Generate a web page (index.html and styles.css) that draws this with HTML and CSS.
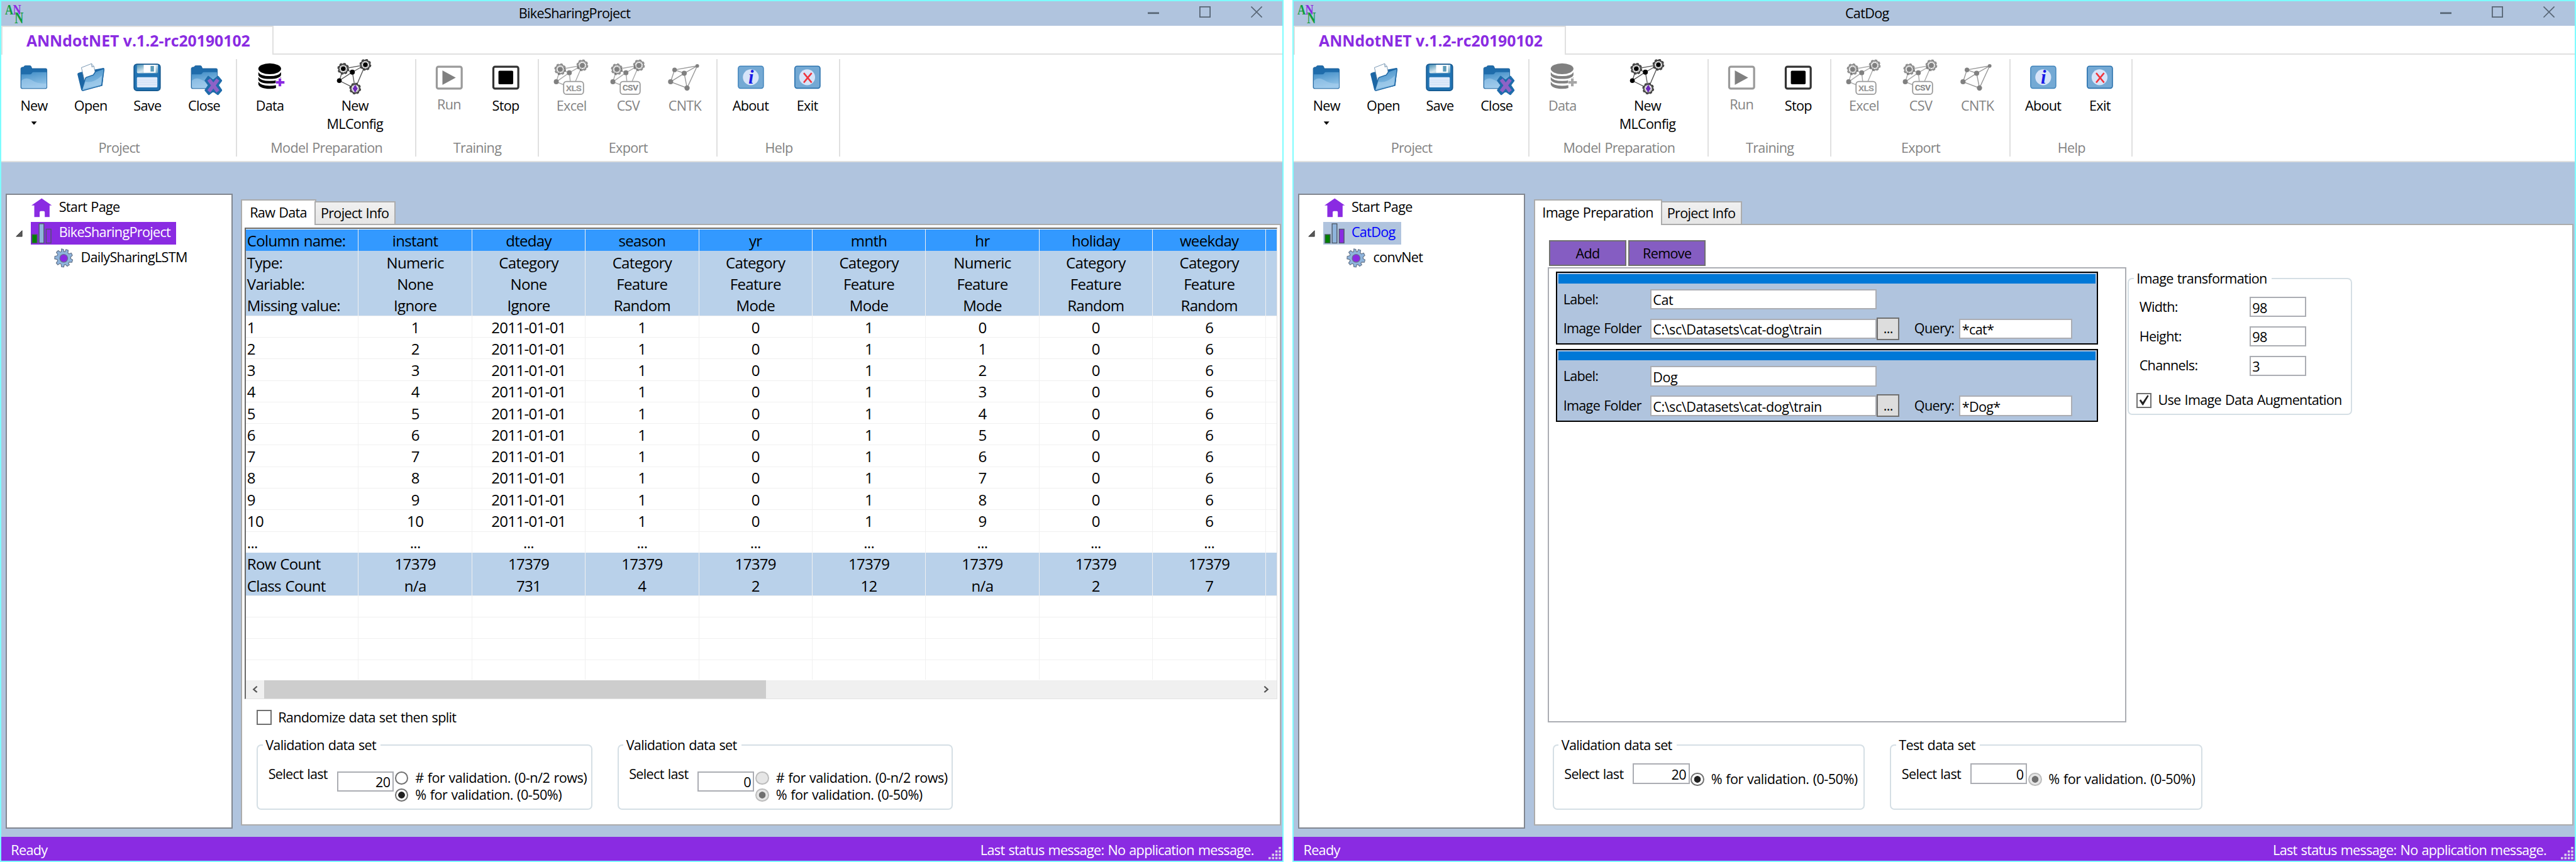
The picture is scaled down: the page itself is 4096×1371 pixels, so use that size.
FILE: index.html
```
<!DOCTYPE html>
<html lang="en">
<head>
<meta charset="utf-8">
<title>ANNdotNET</title>
<link rel="stylesheet" href="styles.css">
</head>
<body>
<svg class="sprite" aria-hidden="true">
  <defs>
    <linearGradient id="gBlue" x1="0" y1="0" x2="0.6" y2="1"><stop offset="0" stop-color="#2a7ab8"/><stop offset="1" stop-color="#8fc1e6"/></linearGradient>
    <linearGradient id="gFront" x1="0" y1="0" x2="0.3" y2="1"><stop offset="0" stop-color="#3f8cc6"/><stop offset="1" stop-color="#93c4e8"/></linearGradient>
    <linearGradient id="gMetal" x1="0" y1="0" x2="1" y2="1"><stop offset="0" stop-color="#4d93b5"/><stop offset="0.5" stop-color="#d5e6ee"/><stop offset="1" stop-color="#6ba3bf"/></linearGradient>
    <g id="cog">
      <circle r="8" fill="#fff" stroke="#444" stroke-width="2.4"/>
      <circle r="9.4" fill="none" stroke="#444" stroke-width="2" stroke-dasharray="4.2 3.2"/>
      <circle r="5.8" fill="none" stroke="#777" stroke-width="1.4" stroke-dasharray="1.6 1.6"/>
    </g>
    <g id="net">
      <path d="M12 17 51 10 33 52 28 23 5 38 33 52M12 17 5 38M28 23 51 10M12 17 28 23" fill="none" stroke="#555" stroke-width="1.5"/>
      <use href="#cog" x="12" y="17"/><use href="#cog" x="51" y="10"/>
      <circle cx="12" cy="17" r="4.2"/><circle cx="51" cy="10" r="4.2"/><circle cx="28" cy="23" r="4.4"/><circle cx="5" cy="38" r="4.2"/>
    </g>
    <g id="netgray">
      <path d="M12 18 51 11 36 46M28 24 30 42M28 24 5 40 20 46M12 18 5 40M28 24 51 11M12 18 28 24" fill="none" stroke="#aaa" stroke-width="1.6"/>
      <g opacity=".6"><use href="#cog" x="12" y="18"/><use href="#cog" x="51" y="11"/></g>
      <g fill="#808080"><circle cx="12" cy="18" r="4.4"/><circle cx="51" cy="11" r="4.4"/><circle cx="28" cy="24" r="4.4"/><circle cx="5" cy="40" r="4.4"/></g>
      <rect x="18" y="39.500" width="35" height="22.500" rx="5" fill="#fff" stroke="#999" stroke-width="2"/>
    </g>
    <g id="folderShape">
      <path d="M9 50V17q0-2 2-2.500l3-.3 1-1.700q.6-.8 2-.8h8q1.500 0 2 1l1.500 4H53q2 0 2 2V50q0 2-2 2H11q-2 0-2-2Z" fill="#1f6cab" stroke="#195e98"/>
      <path d="M10 27h15q2 0 3-1.500l1-1.500q.8-1 2-1h22.500q1 0 1 1V49q0 2.200-2 2.200H12q-2 0-2-2.200Z" fill="url(#gFront)"/>
      <path d="M10 38q8-7 18-1 10 7 26 6v6q0 2.200-2 2.200H12q-2 0-2-2.200Z" fill="#a9d0ef" opacity=".55"/>
    </g>
  </defs>
  <symbol id="i-logo" viewBox="0 0 36 36">
    <g font-family="Liberation Serif, serif" font-weight="bold">
      <text x="1" y="19" font-size="26" textLength="14" lengthAdjust="spacingAndGlyphs" fill="#0f9d3c">A</text>
      <text x="15" y="19" font-size="26" textLength="14" lengthAdjust="spacingAndGlyphs" fill="#8a2be2">N</text>
      <text x="18" y="34" font-size="28" textLength="15" lengthAdjust="spacingAndGlyphs" fill="#0f9d3c">N</text>
    </g>
  </symbol>
  <symbol id="i-new" viewBox="0 0 64 64"><use href="#folderShape"/></symbol>
  <symbol id="i-open" viewBox="0 0 64 64">
    <path d="M9 27q0-2 1.500-2.500l4-1.500L55 15.500q1.500 0 1 2L53 47 18 55q-2 .5-2.500-1.500Z" fill="#1c66a4"/>
    <path d="m16 15 18-7 4 4.500 4 19-20 9Z" fill="#fdfdfd" stroke="#6a8cab"/>
    <path d="m34 8 .5 6 3.500-1.500" fill="#dfe6ee" stroke="#6a8cab"/>
    <path d="m17 54 6-20q.6-1.500 2-2l12-4 4-6L55 17q1 0 .8 2L52 45q-.3 1.500-2 2L19 55.500q-2 .3-2-1.500Z" fill="url(#gFront)" stroke="#1c66a4" stroke-width="1.600"/>
    <path d="m19 52 4-12q14 3 29-11l-2 16Z" fill="#b4d7f2" opacity=".5"/>
  </symbol>
  <symbol id="i-save" viewBox="0 0 64 64">
    <rect x="8" y="9" width="46" height="46.500" rx="5" fill="#2274b4" stroke="#14588f" stroke-width="2"/>
    <path d="M13 10h37v13q0 2-2 2H15q-2 0-2-2Z" fill="url(#gMetal)"/>
    <rect x="25" y="10" width="21" height="14" fill="#fff"/><rect x="37" y="12" width="6" height="10" fill="#5b9bb8"/>
    <rect x="13" y="32" width="36" height="18" rx="1.500" fill="#dfeafa"/>
    <path d="M13 37h36M13 41h36M13 45h36" stroke="#c9dbf4" stroke-width=".8"/>
  </symbol>
  <symbol id="i-close" viewBox="0 0 64 64">
    <use href="#folderShape"/>
    <path d="m39 31 8.500 7L56 31l6 7-6 8 6 9-6 7-8.500-6L40 62l-6-7 6-9-6-8Z" fill="#1f6cab" stroke="#1f6cab" stroke-width="3" stroke-linejoin="round"/>
    <path d="m40 36 16 21M56 36 40 57" stroke="#8e62c6" stroke-width="6.500"/>
  </symbol>
  <symbol id="i-data" viewBox="0 0 64 64">
    <ellipse cx="32" cy="17" rx="20" ry="9.500"/>
    <path d="M12 23q4 7 20 7t20-7v5q-2 7-20 7t-20-7ZM12 31.500q4 7 20 7t20-7v4.500q-2 7-20 7t-20-7ZM12 40q4 7 20 7 6 0 11-1v5q-4 1.500-11 1.500-17 0-20-7.500Z"/>
    <path d="M50 33v16M42.500 41h15.500" stroke="#fff" stroke-width="8"/>
    <path d="M50 34v14M43 41h15" stroke="#8a2be2" stroke-width="4.600"/>
  </symbol>
  <symbol id="i-ml" viewBox="0 0 64 64"><use href="#net"/><use href="#cog" x="33" y="52"/><path d="m33 45 4.500 7-4.500 7-4.500-7Z" fill="#6d28b8"/></symbol>
  <symbol id="i-run" viewBox="0 0 64 64"><rect x="10.500" y="13.500" width="44" height="38.500" rx="3" fill="#fff" stroke="#9a9a9a" stroke-width="3.600"/><path d="M20.500 20v25.500L44 32.700Z" fill="#808080"/></symbol>
  <symbol id="i-stop" viewBox="0 0 64 64"><rect x="10.500" y="13.500" width="44" height="38.500" rx="3" fill="#fff" stroke="#333" stroke-width="3.600"/><rect x="19.500" y="20.500" width="26" height="24" rx="2"/></symbol>
  <symbol id="i-xls" viewBox="0 0 64 64"><use href="#netgray"/><text x="35.500" y="56.500" font-size="15" text-anchor="middle" textLength="27" lengthAdjust="spacingAndGlyphs" font-family="Roboto, sans-serif" font-weight="bold" fill="#999">XLS</text></symbol>
  <symbol id="i-csv" viewBox="0 0 64 64"><use href="#netgray"/><text x="35.500" y="56" font-size="14" text-anchor="middle" textLength="27" lengthAdjust="spacingAndGlyphs" font-family="Roboto, sans-serif" font-weight="bold" fill="#888">CSV</text></symbol>
  <symbol id="i-cntk" viewBox="0 0 64 64">
    <path d="M14 19 54 12 36 51 7 40 14 19 31 25 54 12M31 25 7 40M31 25 36 51" fill="none" stroke="#999" stroke-width="1.600"/>
    <g fill="#808080"><circle cx="14" cy="19" r="4"/><circle cx="31" cy="25" r="4.500"/><circle cx="54" cy="12" r="3.200"/><circle cx="7" cy="40" r="4.500"/><circle cx="36" cy="51" r="4.600"/></g>
  </symbol>
  <symbol id="i-about" viewBox="0 0 64 64"><rect x="9.800" y="12.500" width="44.500" height="39" rx="4" fill="#74a9d4" stroke="#3f83bb" stroke-width="1.600"/><circle cx="32" cy="32" r="14" fill="#d7e4f9"/><text x="32" y="43" font-family="Liberation Serif, serif" font-style="italic" font-weight="bold" font-size="34" text-anchor="middle" fill="#1a1ae6">i</text></symbol>
  <symbol id="i-exit" viewBox="0 0 64 64"><rect x="9.800" y="12.500" width="44.500" height="39" rx="4" fill="#74a9d4" stroke="#2c73ae" stroke-width="1.800"/><circle cx="31.500" cy="32" r="14" fill="#d7e4f9"/><path d="m25.500 24.500 14 17M39.500 24.500l-14 17" stroke="#f0343c" stroke-width="2.800"/></symbol>
  <symbol id="i-home" viewBox="0 0 36 34"><path d="M18 .5 36 13h-4v20.500h-8.500V25q0-2-2-2h-5q-2 0-2 2v8.500H5V13H0Z" fill="#8a2be2"/></symbol>
  <symbol id="i-bars" viewBox="0 0 36 36"><g stroke="#4d5866" stroke-width="1.500"><rect x="1" y="20" width="9" height="15" fill="#008000"/><rect x="13.500" y="1" width="8.500" height="34" fill="#8fb4dc"/><rect x="26" y="10.500" width="8.500" height="24.500" fill="#8a2be2"/></g></symbol>
  <symbol id="i-gear" viewBox="0 0 34 34">
    <path d="m13 1 3.500 1 .8 4h2L21 2l4 1.500-.7 4.500 2 1.800 4-1.500 2 4-3 3v3l3.400 2-1.200 4.200-4.500-.3-1.800 2L27 29l-3.800 2.500L20 28.500l-2 .4-1 4.100-4-.6-.6-4.400-2-1.300-3.900 2.500-2.700-3.500 2.600-3.700-.8-2.300L1 18.500l.3-4.500 4.200-1 1-2.200L4 7l3.300-3 3.700 2.500 1.800-.7Z" fill="#8fb4dc" stroke="#64748a" stroke-width="1.300"/>
    <circle cx="17" cy="17.500" r="7" fill="#8a2be2" stroke="#64748a" stroke-width="1.300"/>
  </symbol>
  <symbol id="i-expand" viewBox="0 0 12 12"><path d="M11.300.8v10.500H.8Z" fill="#595959" stroke="#262626"/></symbol>
  <symbol id="i-min" viewBox="0 0 20 20"><path d="M0 12h20" stroke="#566473" stroke-width="3"/></symbol>
  <symbol id="i-max" viewBox="0 0 20 20"><path d="M1 1h18v18H1Z" fill="none" stroke="#566473" stroke-width="2"/></symbol>
  <symbol id="i-x" viewBox="0 0 20 20"><path d="m.5.5 19 19M19.500.5l-19 19" stroke="#566473" stroke-width="1.800"/></symbol>
  <symbol id="i-prev" viewBox="0 0 10 12"><path d="M8.500.8 2.500 6l6 5.200" fill="none" stroke="#555" stroke-width="2.400"/></symbol>
  <symbol id="i-next" viewBox="0 0 10 12"><path d="m1.500.8 6 5.200-6 5.200" fill="none" stroke="#555" stroke-width="2.400"/></symbol>
  <symbol id="i-grip" viewBox="0 0 22 22"><path d="M18 0h4v4h-4zM12 6h4v4h-4zM18 6h4v4h-4zM6 12h4v4H6zM12 12h4v4h-4zM18 12h4v4h-4zM0 18h4v4H0zM6 18h4v4H6zM12 18h4v4h-4zM18 18h4v4h-4z" fill="#d9d0ea"/></symbol>
  <symbol id="i-check" viewBox="0 0 22 22"><path d="m3 11 2.500-1.800L9 14 17.500 1.500 19.500 3 9.800 19.500H8.500Z" fill="#212121"/></symbol>
</svg>

<main class="desktop">
  <section class="window">
    <header class="titlebar">
      <svg class="logo"><use href="#i-logo"/></svg>
      <h1 class="title">BikeSharingProject</h1>
      <div class="caption"><svg><use href="#i-min"/></svg><svg><use href="#i-max"/></svg><svg><use href="#i-x"/></svg></div>
    </header>
    <div class="ribbon-tabs"><div class="ribbon-tab">ANNdotNET v.1.2-rc20190102</div><div class="ribbon-rest"></div></div>
    <nav class="ribbon">
      <div class="group">
        <div class="tools">
          <div class="tool"><svg><use href="#i-new"/></svg><span>New</span><i class="drop"></i></div>
          <div class="tool"><svg><use href="#i-open"/></svg><span>Open</span></div>
          <div class="tool"><svg><use href="#i-save"/></svg><span>Save</span></div>
          <div class="tool"><svg><use href="#i-close"/></svg><span>Close</span></div>
        </div>
        <div class="group-name">Project</div>
      </div>
      <div class="group">
        <div class="tools">
          <div class="tool"><svg><use href="#i-data"/></svg><span>Data</span></div>
          <div class="tool tool-wide"><svg><use href="#i-ml"/></svg><span>New<br>MLConfig</span></div>
        </div>
        <div class="group-name">Model Preparation</div>
      </div>
      <div class="group">
        <div class="tools">
          <div class="tool off raised"><svg><use href="#i-run"/></svg><span>Run</span></div>
          <div class="tool"><svg><use href="#i-stop"/></svg><span>Stop</span></div>
        </div>
        <div class="group-name">Training</div>
      </div>
      <div class="group">
        <div class="tools">
          <div class="tool off"><svg><use href="#i-xls"/></svg><span>Excel</span></div>
          <div class="tool off"><svg><use href="#i-csv"/></svg><span>CSV</span></div>
          <div class="tool off"><svg><use href="#i-cntk"/></svg><span>CNTK</span></div>
        </div>
        <div class="group-name">Export</div>
      </div>
      <div class="group">
        <div class="tools">
          <div class="tool"><svg><use href="#i-about"/></svg><span>About</span></div>
          <div class="tool"><svg><use href="#i-exit"/></svg><span>Exit</span></div>
        </div>
        <div class="group-name">Help</div>
      </div>
    </nav>
    <div class="work">
      <aside class="tree">
        <div class="node"><span class="twist"></span><span class="item"><svg class="home"><use href="#i-home"/></svg>Start Page</span></div>
        <div class="node"><span class="twist"><svg><use href="#i-expand"/></svg></span><span class="item active"><svg><use href="#i-bars"/></svg>BikeSharingProject</span></div>
        <div class="node child"><span class="twist"></span><span class="item"><svg><use href="#i-gear"/></svg>DailySharingLSTM</span></div>
      </aside>
      <div class="tabs">
        <div class="tab-row"><div class="tab current">Raw Data</div><div class="tab">Project Info</div></div>
        <div class="page">
          <div class="grid">
            <table>
              <tbody>
                <tr class="head"><td>Column name:</td><td>instant</td><td>dteday</td><td>season</td><td>yr</td><td>mnth</td><td>hr</td><td>holiday</td><td>weekday</td><td></td></tr>
                <tr class="meta"><td>Type:</td><td>Numeric</td><td>Category</td><td>Category</td><td>Category</td><td>Category</td><td>Numeric</td><td>Category</td><td>Category</td><td></td></tr>
                <tr class="meta"><td>Variable:</td><td>None</td><td>None</td><td>Feature</td><td>Feature</td><td>Feature</td><td>Feature</td><td>Feature</td><td>Feature</td><td></td></tr>
                <tr class="meta"><td>Missing value:</td><td>Ignore</td><td>Ignore</td><td>Random</td><td>Mode</td><td>Mode</td><td>Mode</td><td>Random</td><td>Random</td><td></td></tr>
                <tr><td>1</td><td>1</td><td>2011-01-01</td><td>1</td><td>0</td><td>1</td><td>0</td><td>0</td><td>6</td><td></td></tr>
                <tr><td>2</td><td>2</td><td>2011-01-01</td><td>1</td><td>0</td><td>1</td><td>1</td><td>0</td><td>6</td><td></td></tr>
                <tr><td>3</td><td>3</td><td>2011-01-01</td><td>1</td><td>0</td><td>1</td><td>2</td><td>0</td><td>6</td><td></td></tr>
                <tr><td>4</td><td>4</td><td>2011-01-01</td><td>1</td><td>0</td><td>1</td><td>3</td><td>0</td><td>6</td><td></td></tr>
                <tr><td>5</td><td>5</td><td>2011-01-01</td><td>1</td><td>0</td><td>1</td><td>4</td><td>0</td><td>6</td><td></td></tr>
                <tr><td>6</td><td>6</td><td>2011-01-01</td><td>1</td><td>0</td><td>1</td><td>5</td><td>0</td><td>6</td><td></td></tr>
                <tr><td>7</td><td>7</td><td>2011-01-01</td><td>1</td><td>0</td><td>1</td><td>6</td><td>0</td><td>6</td><td></td></tr>
                <tr><td>8</td><td>8</td><td>2011-01-01</td><td>1</td><td>0</td><td>1</td><td>7</td><td>0</td><td>6</td><td></td></tr>
                <tr><td>9</td><td>9</td><td>2011-01-01</td><td>1</td><td>0</td><td>1</td><td>8</td><td>0</td><td>6</td><td></td></tr>
                <tr><td>10</td><td>10</td><td>2011-01-01</td><td>1</td><td>0</td><td>1</td><td>9</td><td>0</td><td>6</td><td></td></tr>
                <tr><td>...</td><td>...</td><td>...</td><td>...</td><td>...</td><td>...</td><td>...</td><td>...</td><td>...</td><td></td></tr>
                <tr class="meta"><td>Row Count</td><td>17379</td><td>17379</td><td>17379</td><td>17379</td><td>17379</td><td>17379</td><td>17379</td><td>17379</td><td></td></tr>
                <tr class="meta"><td>Class Count</td><td>n/a</td><td>731</td><td>4</td><td>2</td><td>12</td><td>n/a</td><td>2</td><td>7</td><td></td></tr>
                <tr><td></td><td></td><td></td><td></td><td></td><td></td><td></td><td></td><td></td><td></td></tr>
                <tr><td></td><td></td><td></td><td></td><td></td><td></td><td></td><td></td><td></td><td></td></tr>
                <tr><td></td><td></td><td></td><td></td><td></td><td></td><td></td><td></td><td></td><td></td></tr>
                <tr><td></td><td></td><td></td><td></td><td></td><td></td><td></td><td></td><td></td><td></td></tr>
              </tbody>
            </table>
            <div class="scroll"><span class="arrow"><svg><use href="#i-prev"/></svg></span><span class="thumb"></span><span class="arrow end"><svg><use href="#i-next"/></svg></span></div>
          </div>
          <label class="check-row random"><span class="check"></span>Randomize data set then split</label>
          <div class="sets">
            <fieldset class="set">
              <legend>Validation data set</legend>
              <div class="pick"><span class="pick-label">Select last</span><input class="num" value="20">
                <div class="options"><label><span class="radio"></span># for validation. (0-n/2 rows)</label><label><span class="radio on"></span>% for validation. (0-50%)</label></div></div>
            </fieldset>
            <fieldset class="set">
              <legend>Validation data set</legend>
              <div class="pick"><span class="pick-label">Select last</span><input class="num" value="0">
                <div class="options"><label><span class="radio dim"></span># for validation. (0-n/2 rows)</label><label><span class="radio on dim"></span>% for validation. (0-50%)</label></div></div>
            </fieldset>
          </div>
        </div>
      </div>
    </div>
    <footer class="status"><span>Ready</span><span class="message">Last status message: No application message.</span><svg><use href="#i-grip"/></svg></footer>
  </section>

  <section class="window">
    <header class="titlebar">
      <svg class="logo"><use href="#i-logo"/></svg>
      <h1 class="title">CatDog</h1>
      <div class="caption"><svg><use href="#i-min"/></svg><svg><use href="#i-max"/></svg><svg><use href="#i-x"/></svg></div>
    </header>
    <div class="ribbon-tabs"><div class="ribbon-tab">ANNdotNET v.1.2-rc20190102</div><div class="ribbon-rest"></div></div>
    <nav class="ribbon">
      <div class="group">
        <div class="tools">
          <div class="tool"><svg><use href="#i-new"/></svg><span>New</span><i class="drop"></i></div>
          <div class="tool"><svg><use href="#i-open"/></svg><span>Open</span></div>
          <div class="tool"><svg><use href="#i-save"/></svg><span>Save</span></div>
          <div class="tool"><svg><use href="#i-close"/></svg><span>Close</span></div>
        </div>
        <div class="group-name">Project</div>
      </div>
      <div class="group">
        <div class="tools">
          <div class="tool off"><svg class="faded"><use href="#i-data"/></svg><span>Data</span></div>
          <div class="tool tool-wide"><svg><use href="#i-ml"/></svg><span>New<br>MLConfig</span></div>
        </div>
        <div class="group-name">Model Preparation</div>
      </div>
      <div class="group">
        <div class="tools">
          <div class="tool off raised"><svg><use href="#i-run"/></svg><span>Run</span></div>
          <div class="tool"><svg><use href="#i-stop"/></svg><span>Stop</span></div>
        </div>
        <div class="group-name">Training</div>
      </div>
      <div class="group">
        <div class="tools">
          <div class="tool off"><svg><use href="#i-xls"/></svg><span>Excel</span></div>
          <div class="tool off"><svg><use href="#i-csv"/></svg><span>CSV</span></div>
          <div class="tool off"><svg><use href="#i-cntk"/></svg><span>CNTK</span></div>
        </div>
        <div class="group-name">Export</div>
      </div>
      <div class="group">
        <div class="tools">
          <div class="tool"><svg><use href="#i-about"/></svg><span>About</span></div>
          <div class="tool"><svg><use href="#i-exit"/></svg><span>Exit</span></div>
        </div>
        <div class="group-name">Help</div>
      </div>
    </nav>
    <div class="work">
      <aside class="tree">
        <div class="node"><span class="twist"></span><span class="item"><svg class="home"><use href="#i-home"/></svg>Start Page</span></div>
        <div class="node"><span class="twist"><svg><use href="#i-expand"/></svg></span><span class="item inactive"><svg><use href="#i-bars"/></svg>CatDog</span></div>
        <div class="node child"><span class="twist"></span><span class="item"><svg><use href="#i-gear"/></svg>convNet</span></div>
      </aside>
      <div class="tabs">
        <div class="tab-row"><div class="tab current">Image Preparation</div><div class="tab">Project Info</div></div>
        <div class="page">
          <div class="actions"><button>Add</button><button>Remove</button></div>
          <div class="prep">
            <div class="classes">
              <article class="card">
                <div class="card-bar"></div>
                <div class="card-row"><span class="card-label">Label:</span><input class="wide" value="Cat"></div>
                <div class="card-row tall"><span class="card-label">Image Folder</span><input class="wide" value="C:\sc\Datasets\cat-dog\train"><button class="browse">...</button><span class="query">Query:</span><input class="mid" value="*cat*"></div>
              </article>
              <article class="card">
                <div class="card-bar"></div>
                <div class="card-row"><span class="card-label">Label:</span><input class="wide" value="Dog"></div>
                <div class="card-row tall"><span class="card-label">Image Folder</span><input class="wide" value="C:\sc\Datasets\cat-dog\train"><button class="browse">...</button><span class="query">Query:</span><input class="mid" value="*Dog*"></div>
              </article>
            </div>
            <fieldset class="transform">
              <legend>Image transformation</legend>
              <div class="sizes">
                <label><span>Width:</span><input value="98"></label>
                <label><span>Height:</span><input value="98"></label>
                <label><span>Channels:</span><input value="3"></label>
              </div>
              <label class="check-row augment"><span class="check"><svg><use href="#i-check"/></svg></span>Use Image Data Augmentation</label>
            </fieldset>
          </div>
          <div class="sets sets-prep">
            <fieldset class="set">
              <legend>Validation data set</legend>
              <div class="pick"><span class="pick-label">Select last</span><input class="num" value="20">
                <div class="options"><label><span class="radio on"></span>% for validation. (0-50%)</label></div></div>
            </fieldset>
            <fieldset class="set">
              <legend>Test data set</legend>
              <div class="pick"><span class="pick-label">Select last</span><input class="num" value="0">
                <div class="options"><label><span class="radio on dim"></span>% for validation. (0-50%)</label></div></div>
            </fieldset>
          </div>
        </div>
      </div>
    </div>
    <footer class="status"><span>Ready</span><span class="message">Last status message: No application message.</span><svg><use href="#i-grip"/></svg></footer>
  </section>
</main>
</body>
</html>
```
FILE: styles.css
```
:root {
  --line: 2.25px;
  --steel: #b0c4de;
  --violet: #8a2be2;
  --edge: #acacac;
}

* { box-sizing: border-box; }

html, body { margin: 0; overflow: hidden; background: #fff; }

body {
  font: 24px/32px "Open Sans", "Noto Sans", sans-serif;
  letter-spacing: -0.032em;
  word-spacing: 0.05em;
  color: #000;
  white-space: nowrap;
}

svg { display: block; flex: none; overflow: visible; }
.sprite { position: absolute; width: 0; height: 0; }

input, button {
  font: inherit;
  letter-spacing: inherit;
  color: inherit;
  margin: 0;
  border-radius: 0;
  outline: 0;
}

input {
  height: 36px;
  width: 100px;
  padding: 2px 4px 0 3px;
  border: var(--line) solid #abadb3;
  background: #fff;
  flex: none;
}

fieldset {
  margin: 0;
  min-width: 0;
  padding: 0 0 0 8.5px;
  border: var(--line) solid #d5dfe5;
  border-radius: 8px;
}

legend { padding: 0 8px 1px 5px; line-height: 31px; }

.desktop {
  zoom: 0.9018;
  width: 4542px;
  height: 1520px;
  display: flex;
  gap: 16px;
}

.window {
  width: 2263px;
  height: 1520px;
  border: var(--line) solid #7dfdff;
  background: var(--steel);
  display: flex;
  flex-direction: column;
}

/* Title bar */
.titlebar { height: 43px; flex: none; display: flex; align-items: flex-start; }
.logo { width: 36px; height: 36px; margin: 4px 0 0 5px; }
.title { flex: 1; margin: 0; padding-right: 281px; font: inherit; line-height: 43px; text-align: center; }
.caption { display: flex; gap: 71px; padding: 9px 35px 0 0; margin-left: -240px; }
.caption svg { width: 20px; height: 20px; }

/* Ribbon */
.ribbon-tabs { height: 51px; flex: none; display: flex; background: #fff; }
.ribbon-tab {
  width: 480px;
  padding-left: 42px;
  border: var(--line) solid #e0e0e0;
  border-bottom: 0;
  color: var(--violet);
  font-size: 27.5px;
  font-weight: 700;
  line-height: 48px;
  letter-spacing: 0;
  word-spacing: 0;
}
.ribbon-rest { flex: 1; border-bottom: var(--line) solid #e0e0e0; }
.ribbon {
  height: 190px;
  flex: none;
  display: flex;
  padding: 8px 0;
  background: #fff;
  border-bottom: var(--line) solid #e0e0e0;
}
.group { padding: 0 6px 0 7.7px; border-right: var(--line) solid #e0e0e0; }
.tools { display: flex; height: 141px; }
.tool { width: 100px; display: flex; flex-direction: column; align-items: center; text-align: center; }
.tool-wide { width: 200px; }
.tool svg { width: 64px; height: 64px; margin-bottom: 1px; }
.tool span { line-height: 33px; }
.tool .faded { filter: grayscale(1) opacity(0.5); }
.off, .group-name { color: #838383; }
.raised span { margin-top: -2px; }
.drop { width: 10px; height: 6px; margin-top: 12px; background: #000; clip-path: polygon(0 0, 100% 0, 50% 100%); }
.group-name { text-align: center; }

/* Work area */
.work { flex: 1; min-height: 0; display: flex; padding: 55px 2px 14px 8px; gap: 15px; }
.tree { width: 400px; flex: none; padding-top: 4px; background: #fff; border: var(--line) solid #828790; }
.node { display: flex; height: 40px; margin-bottom: 4px; }
.twist { width: 42px; flex: none; padding: 14px 0 0 15px; }
.twist svg { width: 12px; height: 12px; }
.child .twist { width: 82px; }
.item { display: flex; padding-right: 10px; line-height: 35px; }
.item svg { width: 36px; height: 36px; margin: 2px 12px 0 1.500px; }
.item .home { height: 34px; }
.child svg { width: 34px; height: 34px; margin: 3px 13px 0 1px; }
.active { background: var(--violet); color: #fff; }
.inactive { background: var(--steel); color: #00f; }

.tabs { flex: 1; min-width: 0; display: flex; flex-direction: column; padding: 10px 0 6px; }
.tab-row { display: flex; align-items: flex-end; height: 46px; margin-bottom: -2px; flex: none; position: relative; }
.tab {
  height: 42px;
  margin-left: -3px;
  padding: 0 10px 0 9px;
  line-height: 38px;
  border: var(--line) solid var(--edge);
  background: linear-gradient(#f0f0f0, #e5e5e5);
}
.tab.current { height: 46px; margin: 0; padding: 0 14px 0 13px; line-height: 43px; border-bottom: 0; background: #fff; }
.page { flex: 1; min-height: 0; background: #fff; border: var(--line) solid var(--edge); }

/* Data grid */
.grid {
  width: 1821px;
  height: 832px;
  margin: 4px 0 0 4px;
  border: 1.2px solid #e3e3e3;
  border-top: var(--line) solid #696969;
  border-left: var(--line) solid #696969;
  padding-top: 1px;
  font-size: 26.67px;
}
.grid table, .grid tbody { display: block; }
.grid table { height: 794px; overflow: hidden; }
.grid tr { display: grid; grid-template-columns: 199px repeat(8, 200px) 1fr; height: 38px; }
.grid td {
  padding: 4px 0 0;
  line-height: 34px;
  text-align: center;
  border-right: 1.2px solid #f0f0f0;
  border-bottom: 1.2px solid #f0f0f0;
}
.grid td:first-child { text-align: left; padding-left: 2px; }
.grid td:last-child { border-right: 0; }
.grid .head td { background: #39f; }
.grid .meta td { background: #b9d1ea; }
.scroll { display: flex; height: 32px; margin-top: 1px; background: #f0f0f0; }
.arrow { width: 32px; display: flex; align-items: center; justify-content: center; }
.arrow svg { width: 10px; height: 12px; }
.arrow.end { margin-left: auto; width: 36px; }
.thumb { width: 885px; background: #cdcdcd; }

/* Check boxes and radio buttons */
.check-row { display: flex; align-items: center; gap: 11px; }
.check { width: 27px; height: 27px; border: var(--line) solid #707070; background: #fff; }
.check svg { width: 22px; height: 22px; }
.random { margin: 16px 0 0 25px; }
.radio {
  width: 24px;
  height: 24px;
  border: var(--line) solid #707070;
  border-radius: 50%;
  background: #fff;
  flex: none;
}
.radio.on { background: radial-gradient(circle, #212121 5.5px, #fff 6.3px); }
.radio.dim { border-color: #bcbcbc; background: #e6e6e6; }
.radio.dim.on { background: radial-gradient(circle, #707070 5.5px, #e6e6e6 6.3px); }

/* Data set splits */
.sets { display: flex; gap: 44px; margin: 17px 0 0 25px; }
.set { width: 592px; height: 130px; }
.pick { display: flex; align-items: flex-start; padding: 19px 0 0 10px; }
.pick-label { width: 121px; }
.num { margin-top: 11px; text-align: right; }
.options { padding: 11px 0 0 2px; letter-spacing: -0.024em; }
.options label { display: flex; align-items: center; gap: 12px; height: 24px; margin-bottom: 6px; line-height: 34px; }
.sets-prep { margin: 24px 0 0 31px; }
.sets-prep .set { width: 551px; }
.sets-prep .num { margin-top: -3px; }
.sets-prep .options { padding-top: 13px; }

/* Image preparation */
.actions { display: flex; gap: 4px; padding: 26px 0 2px 25px; }
.actions button { width: 136px; height: 46px; padding-top: 3px; border: var(--line) solid #707070; background: #855dc2; }
.prep { display: flex; gap: 2px; padding-left: 23px; }
.classes { width: 1020px; height: 803px; padding: 6px 12px; border: var(--line) solid #abadb3; }
.card { width: 956px; height: 128px; margin-bottom: 8px; padding: 2px; border: var(--line) solid #000; background: var(--steel); }
.card-bar { height: 16px; margin-bottom: 10px; background: #0078d7; }
.card-row { display: flex; align-items: center; height: 36px; padding-left: 8.5px; }
.card-row.tall { height: 40px; margin-top: 14px; }
.card-label { width: 153px; }
.wide { width: 400px; letter-spacing: -0.022em; }
.mid { width: 200px; }
.browse { width: 40px; height: 40px; padding: 0; border: var(--line) solid #707070; background: #ddd; }
.query { width: 105px; padding-left: 26px; }
.transform { width: 396px; height: 256px; margin-top: 4px; }
.sizes { display: grid; gap: 16px; padding: 16px 0 27px 10px; }
.sizes label { display: flex; align-items: center; height: 36px; }
.sizes span { width: 194px; }
.augment { padding-left: 5px; }

/* Status bar */
.status { height: 42px; flex: none; display: flex; line-height: 47px; padding: 0 2px 0 17px; background: var(--violet); color: #fff; }
.message { margin-left: auto; }
.status svg { width: 22px; height: 22px; margin: 18px 0 0 26px; }
```
